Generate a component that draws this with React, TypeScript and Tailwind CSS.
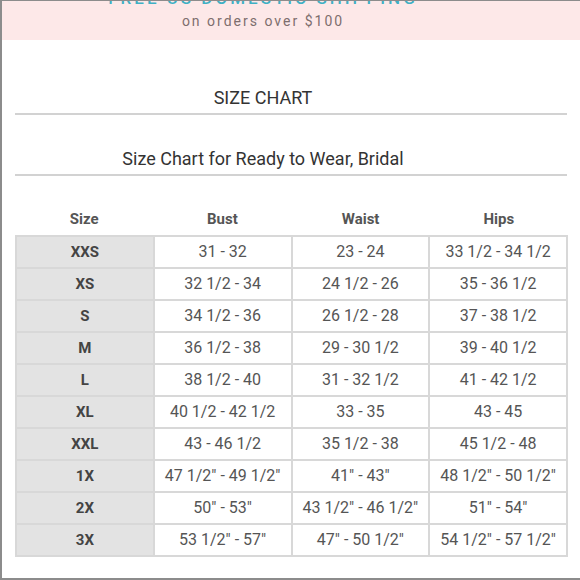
import React from "react";

const rows: [string, string, string, string][] = [
  ["XXS", "31 - 32", "23 - 24", "33 1/2 - 34 1/2"],
  ["XS", "32 1/2 - 34", "24 1/2 - 26", "35 - 36 1/2"],
  ["S", "34 1/2 - 36", "26 1/2 - 28", "37 - 38 1/2"],
  ["M", "36 1/2 - 38", "29 - 30 1/2", "39 - 40 1/2"],
  ["L", "38 1/2 - 40", "31 - 32 1/2", "41 - 42 1/2"],
  ["XL", "40 1/2 - 42 1/2", "33 - 35", "43 - 45"],
  ["XXL", "43 - 46 1/2", "35 1/2 - 38", "45 1/2 - 48"],
  ["1X", "47 1/2\" - 49 1/2\"", "41\" - 43\"", "48 1/2\" - 50 1/2\""],
  ["2X", "50\" - 53\"", "43 1/2\" - 46 1/2\"", "51\" - 54\""],
  ["3X", "53 1/2\" - 57\"", "47\" - 50 1/2\"", "54 1/2\" - 57 1/2\""],
];

export default function App() {
  return (
    <div
      className="w-[580px] h-[580px] overflow-hidden bg-white border-l-2 border-t border-b-2 border-[#8c8c8c] flex flex-col"
      style={{ fontFamily: "Roboto, 'Liberation Sans', sans-serif" }}
    >
      <div className="h-[39px] shrink-0 bg-[#fde8e8] overflow-hidden flex flex-col items-center pr-[56px]">
        <div className="mt-[-13px] text-[17px] leading-[20px] font-medium tracking-[3px] text-[#3fb0c4] whitespace-nowrap">
          FREE US DOMESTIC SHIPPING
        </div>
        <div className="mt-[4px] text-[14px] leading-[18px] tracking-[2px] text-[#7d6e6e] whitespace-nowrap">
          on orders over $100
        </div>
      </div>

      <div className="mt-[46px] pr-[56px] text-center text-[18px] leading-[24px] text-[#333]">SIZE CHART</div>
      <div className="mt-[3px] mx-[13px] h-[2px] bg-[#d2d2d2]" />

      <div className="mt-[32px] pr-[56px] text-center text-[18px] leading-[24px] text-[#333]">
        Size Chart for Ready to Wear, Bridal
      </div>
      <div className="mt-[3px] mx-[13px] h-[2px] bg-[#d2d2d2]" />

      <div className="mt-[33px] ml-[13px] w-[553px] grid grid-cols-4 text-[15px] leading-[20px] font-bold text-[#555] text-center">
        <div>Size</div>
        <div>Bust</div>
        <div>Waist</div>
        <div>Hips</div>
      </div>

      <table className="mt-[6px] ml-[13px] w-[553px] table-fixed border-collapse">
        <tbody>
          {rows.map((r) => (
            <tr key={r[0]} className="h-[32px]">
              <td className="border-2 border-[#d8d8d8] bg-[#e3e3e3] text-center text-[15px] font-bold text-[#444] p-0">
                {r[0]}
              </td>
              <td className="border-2 border-[#d8d8d8] text-center text-[16px] text-[#555] p-0">{r[1]}</td>
              <td className="border-2 border-[#d8d8d8] text-center text-[16px] text-[#555] p-0">{r[2]}</td>
              <td className="border-2 border-[#d8d8d8] text-center text-[16px] text-[#555] p-0">{r[3]}</td>
            </tr>
          ))}
        </tbody>
      </table>
    </div>
  );
}
